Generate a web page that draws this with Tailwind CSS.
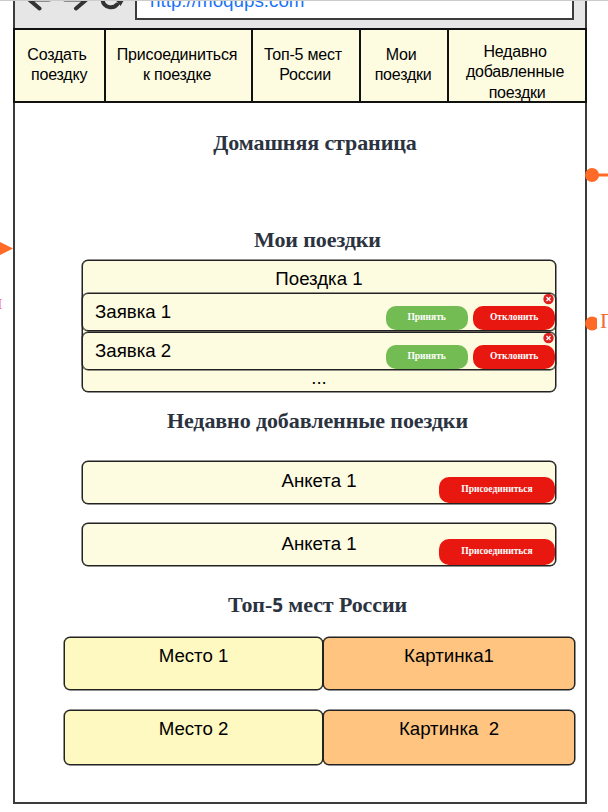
<!DOCTYPE html>
<html lang="ru">
<head>
<meta charset="utf-8">
<title>Домашняя страница</title>
<script src="https://cdn.jsdelivr.net/npm/@tailwindcss/browser@4"></script>
</head>
<body class="relative h-[812px] w-[608px] overflow-hidden bg-white font-['Liberation_Sans',Arial,sans-serif] text-black">
<main class="ml-[13px] flex h-[804px] w-[574px] flex-col border-x-2 border-b-2 border-[#3c3c3c] bg-white">
  <header class="flex h-[28px] shrink-0 overflow-hidden bg-[#e6e6e6]">
    <svg class="h-[20px] w-[120px] shrink-0" viewBox="15 0 120 20" fill="none" stroke="#333" stroke-width="4" stroke-linecap="round" stroke-linejoin="round">
      <path d="M49 -0.500H31M39.500 8.500L29.500 0M65 -0.500H83M76 8.500L86 0"/>
      <path d="M102.500 0C104 9 114 8.500 117 4.500"/>
      <path d="M115.500 0H124L120.500 6Z" fill="#333" stroke="none"/>
    </svg>
    <div class="h-[20px] w-[439px] border-x-2 border-b-2 border-[#3c3c3c] bg-white pl-[13px]">
      <div class="-mt-[10px] text-[18.8px] leading-[22px] whitespace-nowrap text-[#1a73f5]">http://moqups.com</div>
    </div>
  </header>
  <nav class="-mx-[2px] grid h-[75px] shrink-0 grid-cols-[91px_147px_108px_88px_140px] grid-rows-[71px] border-y-2 border-[#111] bg-[#fdfbe0] text-center text-[16px] leading-[20px] tracking-[-0.200px] whitespace-pre">
    <a class="border-l-2 border-[#111] pt-[15px] pr-[5px]">Создать
 поездку</a>
    <a class="border-l-2 border-[#111] pt-[15px] pr-[3px]">Присоединиться
к поездке</a>
    <a class="border-l-2 border-[#111] pt-[15px] pr-[6px]">Топ-5 мест
 России</a>
    <a class="border-l-2 border-[#111] pt-[15px] pr-[6px]">Мои
 поездки</a>
    <a class="border-x-2 border-[#111] pt-[11.500px] pr-[4px] leading-[20.500px]">Недавно
добавленные
 поездки</a>
  </nav>
  <h1 class="mt-[27px] h-[26px] pl-[30px] text-center font-['Liberation_Serif',serif] text-[22px] leading-[26px] font-bold tracking-[-0.100px] text-[#2b333f]">Домашняя страница</h1>
  <h2 class="mt-[71px] h-[26px] pl-[35px] text-center font-['Liberation_Serif',serif] text-[22px] leading-[26px] font-bold tracking-[-0.100px] text-[#2b333f]">Мои поездки</h2>
  <section class="mt-[7px] ml-[67px] flex h-[132px] w-[474px] shrink-0 flex-col rounded-[6px] border-[1.500px] border-[#222] bg-[#fdfbe0] text-[18.67px] shadow-[0_0_0_0.5px_#222]">
    <div class="h-[32px] pt-[7px] text-center leading-[22px]">Поездка 1</div>
    <div class="relative -mx-px flex h-[38px] rounded-[6px] border border-[#222] pl-[12px] shadow-[0_0_0_0.5px_#222]">
      <div class="w-[291px] pt-[7px] leading-[22px]">Заявка 1</div>
      <button class="mt-[12px] h-[24px] w-[82px] rounded-[10px] bg-[#73bb53] pb-[3px] font-['Liberation_Serif',serif] text-[9.500px] leading-[20px] font-bold text-white">Принять</button>
      <button class="mt-[12px] ml-[5.500px] h-[24px] w-[82px] rounded-[10px] bg-[#e81811] pb-[3px] font-['Liberation_Serif',serif] text-[9.500px] leading-[20px] font-bold text-white">Отклонить</button>
      <svg class="absolute top-0 right-[1px] size-[11px]" viewBox="0 0 11 11"><circle cx="5.500" cy="5" r="5.200" fill="#e02020"/><path d="M3.500 3l4 4m0-4l-4 4" stroke="#fff" stroke-width="1.300"/></svg>
    </div>
    <div class="relative -mx-px mt-px flex h-[38px] rounded-[6px] border border-[#222] pl-[12px] shadow-[0_0_0_0.5px_#222]">
      <div class="w-[291px] pt-[7px] leading-[22px]">Заявка 2</div>
      <button class="mt-[12px] h-[24px] w-[82px] rounded-[10px] bg-[#73bb53] pb-[3px] font-['Liberation_Serif',serif] text-[9.500px] leading-[20px] font-bold text-white">Принять</button>
      <button class="mt-[12px] ml-[5.500px] h-[24px] w-[82px] rounded-[10px] bg-[#e81811] pb-[3px] font-['Liberation_Serif',serif] text-[9.500px] leading-[20px] font-bold text-white">Отклонить</button>
      <svg class="absolute top-0 right-[1px] size-[11px]" viewBox="0 0 11 11"><circle cx="5.500" cy="5" r="5.200" fill="#e02020"/><path d="M3.500 3l4 4m0-4l-4 4" stroke="#fff" stroke-width="1.300"/></svg>
    </div>
    <div class="h-[20px] text-center leading-[15px]">...</div>
  </section>
  <h2 class="mt-[16px] h-[26px] pl-[35px] text-center font-['Liberation_Serif',serif] text-[22px] leading-[26px] font-bold tracking-[-0.100px] text-[#2b333f]">Недавно добавленные поездки</h2>
  <section class="mt-[27px] ml-[67px] flex w-[474px] shrink-0 flex-col gap-[19px] text-[18.67px]">
    <div class="grid h-[43px] grid-cols-[356px_116px] rounded-[6px] border border-[#222] bg-[#fdfbe0] shadow-[0_0_0_0.5px_#222]">
      <div class="pt-[8px] pl-[198.500px] leading-[22px]">Анкета 1</div>
      <button class="mt-[15px] h-[26px] w-[116px] rounded-[10px] bg-[#e81811] pb-[2px] font-['Liberation_Serif',serif] text-[9.500px] leading-[20px] font-bold text-white">Присоединиться</button>
    </div>
    <div class="grid h-[43px] grid-cols-[356px_116px] rounded-[6px] border border-[#222] bg-[#fdfbe0] shadow-[0_0_0_0.5px_#222]">
      <div class="pt-[9px] pl-[198.500px] leading-[22px]">Анкета 1</div>
      <button class="mt-[15px] h-[26px] w-[116px] rounded-[10px] bg-[#e81811] pb-[2px] font-['Liberation_Serif',serif] text-[9.500px] leading-[20px] font-bold text-white">Присоединиться</button>
    </div>
  </section>
  <h2 class="mt-[26px] h-[26px] pl-[35px] text-center font-['Liberation_Serif',serif] text-[22px] leading-[26px] font-bold tracking-[-0.100px] text-[#2b333f]">Топ-<span class="font-['Open_Sans',sans-serif] text-[19px]">5</span> мест России</h2>
  <section class="mt-[19px] ml-[49px] grid w-[511px] shrink-0 grid-cols-[259px_252px] grid-rows-[53px_55px] gap-y-[20px] text-center text-[18.67px] leading-[22px] whitespace-pre">
    <div class="rounded-[6px] border border-[#222] bg-[#fef9c0] pt-[7px] shadow-[0_0_0_0.5px_#222]">Место 1</div>
    <div class="rounded-[6px] border border-[#222] bg-[#ffc580] pt-[7px] shadow-[0_0_0_0.5px_#222]">Картинка1</div>
    <div class="rounded-[6px] border border-[#222] bg-[#fef9c0] pt-[7px] shadow-[0_0_0_0.5px_#222]">Место 2</div>
    <div class="rounded-[6px] border border-[#222] bg-[#ffc580] pt-[7px] shadow-[0_0_0_0.5px_#222]">Картинка  2</div>
  </section>
</main>
<div class="absolute top-0 left-0 h-px w-full bg-[#ccc]"></div>
<svg class="absolute top-0 left-0 h-[812px] w-[608px]" viewBox="0 0 608 812" fill="#ff6a26">
  <path d="M0 242L13 248.500L0 255Z"/>
  <circle cx="592" cy="175" r="7"/><path d="M592 173.500H608V176.500H592Z"/>
  <path d="M597 318.500A7 7 0 1 0 597 328.500Z"/>
</svg>
<div class="absolute top-[289px] -left-[9.500px] font-['Liberation_Serif',serif] text-[22px] leading-[26px] text-[#f96b86]">и</div>
<div class="absolute top-[308px] left-[600px] font-['Liberation_Serif',serif] text-[22px] leading-[26px] text-[#f36a35]">П</div>
</body>
</html>
